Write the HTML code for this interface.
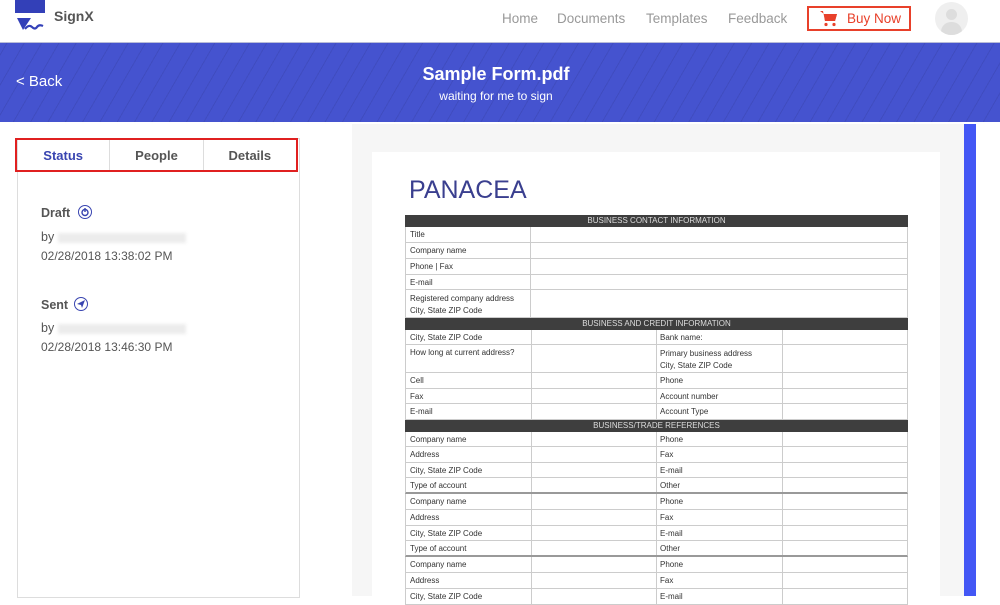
<!DOCTYPE html>
<html><head><meta charset="utf-8"><style>
*{margin:0;padding:0;box-sizing:border-box}
body{width:1000px;height:596px;overflow:hidden;background:#fff;font-family:"Liberation Sans",sans-serif;position:relative}
.hdr{position:absolute;left:0;top:0;width:1000px;height:43px;background:#fff;border-bottom:1px solid #b8bcd8}
.nav{position:absolute;top:11px;font-size:13.5px;color:#999}
.ban{position:absolute;left:0;top:43px;width:1000px;height:79px;background:#4553cf;background-image:repeating-linear-gradient(-60deg,rgba(0,0,0,0) 0 14px,rgba(0,0,0,.08) 14px 15px)}
.gray{position:absolute;left:352px;top:124px;width:612px;height:472px;background:#f6f6f6}
.page{position:absolute;left:372px;top:152px;width:568px;height:444px;background:#fff}
.panel{position:absolute;left:17px;top:138px;width:283px;height:460px;background:#fff;border:1px solid #ddd}
.tabs{position:absolute;left:15px;top:138px;width:283px;height:34px;border:2px solid #e02020;display:flex}
.tabs div{flex:1;text-align:center;line-height:32px;font-size:13px;font-weight:bold;color:#555;border-right:1px solid #ddd}
.tabs div:last-child{border:none}
.t{position:absolute;font-size:12.5px;color:#555}
.bl{display:inline-block;width:128px;height:10px;background:#ececec;vertical-align:middle;filter:blur(1.5px)}
.row{position:absolute;left:405px;width:503px;border-bottom:1px solid #ccc;border-left:1px solid #ccc;border-right:1px solid #ccc;font-size:8px;color:#333}
.row span{position:absolute;top:3px}
.hd{position:absolute;left:405px;width:503px;height:12px;background:#3e3e3e;color:#ddd;font-size:8px;text-align:center;line-height:12px}
.v{position:absolute;top:0;bottom:0;width:1px;background:#ccc}
</style></head><body>
<div class="hdr">
<svg style="position:absolute;left:15px;top:0" width="32" height="32" viewBox="0 0 32 32"><rect x="0" y="0" width="30" height="13" fill="#3340b8"/><path d="M2 18 L16 18 L8 30 Z" fill="#3340b8"/><path d="M10 29 Q14 24 17 27 T22 27 T28 26" stroke="#3340b8" stroke-width="2.2" fill="none"/></svg>
<div style="position:absolute;left:54px;top:8px;font-size:14px;font-weight:bold;color:#555">SignX</div>
<div class="nav" style="left:502px">Home</div>
<div class="nav" style="left:557px">Documents</div>
<div class="nav" style="left:646px">Templates</div>
<div class="nav" style="left:728px">Feedback</div>
<div style="position:absolute;left:807px;top:6px;width:104px;height:25px;border:2px solid #e8402a"></div>
<svg style="position:absolute;left:820px;top:10px" width="18" height="17" viewBox="0 0 18 17"><path d="M0 1 H3 L5 11 H15 L17 4 H4" fill="#e8402a"/><path d="M4 4 H17 L15 11 H5 Z" fill="#e8402a"/><circle cx="6" cy="14.5" r="1.6" fill="#e8402a"/><circle cx="14" cy="14.5" r="1.6" fill="#e8402a"/></svg>
<div class="nav" style="left:847px;color:#e8402a">Buy Now</div>
<div style="position:absolute;left:935px;top:2px;width:33px;height:33px;border-radius:50%;background:#efefef;overflow:hidden"><div style="position:absolute;left:11px;top:7px;width:11px;height:11px;border-radius:50%;background:#ddd"></div><div style="position:absolute;left:6px;top:20px;width:21px;height:16px;border-radius:10px 10px 0 0;background:#ddd"></div></div>
</div>
<div class="ban">
<div style="position:absolute;left:16px;top:30px;color:#fff;font-size:15px">&lt; Back</div>
<div style="position:absolute;left:0;width:992px;top:21px;text-align:center;color:#fff;font-size:18px;font-weight:bold">Sample Form.pdf</div>
<div style="position:absolute;left:0;width:992px;top:46px;text-align:center;color:#fff;font-size:12px">waiting for me to sign</div>
</div>
<div class="gray"></div>
<div style="position:absolute;left:964px;top:124px;width:12px;height:472px;background:#4357f5"></div>
<div class="page"></div>
<div class="panel"></div>
<div class="tabs"><div style="color:#3844b0">Status</div><div>People</div><div>Details</div></div>
<div class="t" style="left:41px;top:206px;font-weight:bold">Draft</div>
<svg style="position:absolute;left:77px;top:204px" width="16" height="16" viewBox="0 0 16 16"><circle cx="8" cy="8" r="6.5" stroke="#3844b0" fill="none"/><circle cx="8" cy="8.5" r="3" stroke="#3844b0" stroke-width="1.4" fill="none"/><path d="M8 4v4" stroke="#3844b0" stroke-width="1.4"/></svg>
<div class="t" style="left:41px;top:230px">by <span class="bl"></span></div>
<div class="t" style="left:41px;top:249px;font-size:12px">02/28/2018 13:38:02 PM</div>
<div class="t" style="left:41px;top:298px;font-weight:bold">Sent</div>
<svg style="position:absolute;left:73px;top:296px" width="16" height="16" viewBox="0 0 16 16"><circle cx="8" cy="8" r="6.5" stroke="#3844b0" fill="none"/><path d="M4 8 L12 4 L9 12 L8 9 Z" fill="#3844b0"/></svg>
<div class="t" style="left:41px;top:321px">by <span class="bl"></span></div>
<div class="t" style="left:41px;top:340px;font-size:12px">02/28/2018 13:46:30 PM</div>
<div style="position:absolute;left:409px;top:176px;font-size:25px;color:#3a3f8f">PANACEA</div>
<div class="hd" style="top:215px">BUSINESS CONTACT INFORMATION</div>
<div class="row" style="top:227px;height:16px"><span style="left:4px">Title</span><i class="v" style="left:124px"></i></div>
<div class="row" style="top:243px;height:16px"><span style="left:4px">Company name</span><i class="v" style="left:124px"></i></div>
<div class="row" style="top:259px;height:16px"><span style="left:4px">Phone | Fax</span><i class="v" style="left:124px"></i></div>
<div class="row" style="top:275px;height:15px"><span style="left:4px">E-mail</span><i class="v" style="left:124px"></i></div>
<div class="row" style="top:290px;height:28px"><span style="left:4px;line-height:12px">Registered company address<br>City, State ZIP Code</span><i class="v" style="left:124px"></i></div>
<div class="hd" style="top:318px">BUSINESS AND CREDIT INFORMATION</div>
<div class="row" style="top:330px;height:15px"><span style="left:4px">City, State ZIP Code</span><i class="v" style="left:125px"></i><span style="left:254px">Bank name:</span><i class="v" style="left:250px"></i><i class="v" style="left:376px"></i></div>
<div class="row" style="top:345px;height:28px"><span style="left:4px">How long at current address?</span><i class="v" style="left:125px"></i><span style="left:254px;line-height:12px">Primary business address<br>City, State ZIP Code</span><i class="v" style="left:250px"></i><i class="v" style="left:376px"></i></div>
<div class="row" style="top:373px;height:16px"><span style="left:4px">Cell</span><i class="v" style="left:125px"></i><span style="left:254px">Phone</span><i class="v" style="left:250px"></i><i class="v" style="left:376px"></i></div>
<div class="row" style="top:389px;height:15px"><span style="left:4px">Fax</span><i class="v" style="left:125px"></i><span style="left:254px">Account number</span><i class="v" style="left:250px"></i><i class="v" style="left:376px"></i></div>
<div class="row" style="top:404px;height:16px"><span style="left:4px">E-mail</span><i class="v" style="left:125px"></i><span style="left:254px">Account Type</span><i class="v" style="left:250px"></i><i class="v" style="left:376px"></i></div>
<div class="hd" style="top:420px">BUSINESS/TRADE REFERENCES</div>
<div class="row" style="top:432px;height:15px"><span style="left:4px">Company name</span><i class="v" style="left:125px"></i><span style="left:254px">Phone</span><i class="v" style="left:250px"></i><i class="v" style="left:376px"></i></div>
<div class="row" style="top:447px;height:16px"><span style="left:4px">Address</span><i class="v" style="left:125px"></i><span style="left:254px">Fax</span><i class="v" style="left:250px"></i><i class="v" style="left:376px"></i></div>
<div class="row" style="top:463px;height:15px"><span style="left:4px">City, State ZIP Code</span><i class="v" style="left:125px"></i><span style="left:254px">E-mail</span><i class="v" style="left:250px"></i><i class="v" style="left:376px"></i></div>
<div class="row" style="top:478px;height:16px;border-bottom:2px solid #999"><span style="left:4px">Type of account</span><i class="v" style="left:125px"></i><span style="left:254px">Other</span><i class="v" style="left:250px"></i><i class="v" style="left:376px"></i></div>
<div class="row" style="top:494px;height:16px"><span style="left:4px">Company name</span><i class="v" style="left:125px"></i><span style="left:254px">Phone</span><i class="v" style="left:250px"></i><i class="v" style="left:376px"></i></div>
<div class="row" style="top:510px;height:16px"><span style="left:4px">Address</span><i class="v" style="left:125px"></i><span style="left:254px">Fax</span><i class="v" style="left:250px"></i><i class="v" style="left:376px"></i></div>
<div class="row" style="top:526px;height:15px"><span style="left:4px">City, State ZIP Code</span><i class="v" style="left:125px"></i><span style="left:254px">E-mail</span><i class="v" style="left:250px"></i><i class="v" style="left:376px"></i></div>
<div class="row" style="top:541px;height:16px;border-bottom:2px solid #999"><span style="left:4px">Type of account</span><i class="v" style="left:125px"></i><span style="left:254px">Other</span><i class="v" style="left:250px"></i><i class="v" style="left:376px"></i></div>
<div class="row" style="top:557px;height:16px"><span style="left:4px">Company name</span><i class="v" style="left:125px"></i><span style="left:254px">Phone</span><i class="v" style="left:250px"></i><i class="v" style="left:376px"></i></div>
<div class="row" style="top:573px;height:16px"><span style="left:4px">Address</span><i class="v" style="left:125px"></i><span style="left:254px">Fax</span><i class="v" style="left:250px"></i><i class="v" style="left:376px"></i></div>
<div class="row" style="top:589px;height:16px"><span style="left:4px">City, State ZIP Code</span><i class="v" style="left:125px"></i><span style="left:254px">E-mail</span><i class="v" style="left:250px"></i><i class="v" style="left:376px"></i></div>
</body></html>
